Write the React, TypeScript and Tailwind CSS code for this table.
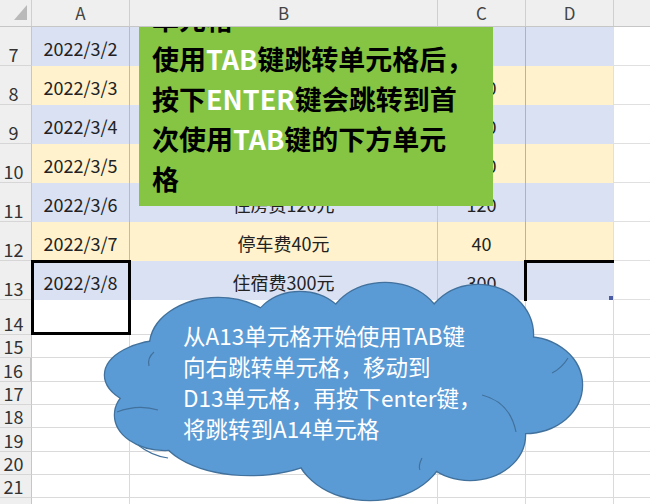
import React from "react";

type DataRow = { n: string; a: string; b: string; c: string; bg: string };

const dataRows: DataRow[] = [
  { n: "7", a: "2022/3/2", b: "交通费80元", c: "80", bg: "bg-[#d9e1f2]" },
  { n: "8", a: "2022/3/3", b: "餐饮费200元", c: "200", bg: "bg-[#fff2cc]" },
  { n: "9", a: "2022/3/4", b: "办公费150元", c: "150", bg: "bg-[#d9e1f2]" },
  { n: "10", a: "2022/3/5", b: "通讯费100元", c: "100", bg: "bg-[#fff2cc]" },
  { n: "11", a: "2022/3/6", b: "住房费120元", c: "120", bg: "bg-[#d9e1f2]" },
  { n: "12", a: "2022/3/7", b: "停车费40元", c: "40", bg: "bg-[#fff2cc]" },
  { n: "13", a: "2022/3/8", b: "住宿费300元", c: "300", bg: "bg-[#d9e1f2]" },
];

const shortRows: { n: string; h: string; mark?: boolean }[] = [
  { n: "15", h: "h-[23px]" },
  { n: "16", h: "h-[24px]", mark: true },
  { n: "17", h: "h-[23px]" },
  { n: "18", h: "h-[23px]" },
  { n: "19", h: "h-[24px]" },
  { n: "20", h: "h-[23px]" },
  { n: "21", h: "h-[23px]" },
  { n: "", h: "h-[23px]" },
];

function Cloud() {
  const ellipses: [number, number, number, number][] = [
    [118, 66, 68, 48],
    [200, 55, 50, 43],
    [285, 50, 58, 47],
    [378, 55, 55, 50],
    [425, 105, 57, 48],
    [370, 155, 55, 45],
    [270, 165, 75, 55],
    [150, 150, 90, 45],
    [65, 135, 50, 35],
    [70, 95, 65, 35],
    [240, 110, 190, 70],
  ];
  return (
    <svg className="absolute left-0 top-0" width="490" height="225" viewBox="0 0 490 225">
      {ellipses.map(([cx, cy, rx, ry], i) => (
        <ellipse key={"s" + i} cx={cx} cy={cy} rx={rx} ry={ry} fill="#5b9bd5" stroke="#41719c" strokeWidth="2.5" />
      ))}
      {ellipses.map(([cx, cy, rx, ry], i) => (
        <ellipse key={"f" + i} cx={cx} cy={cy} rx={rx} ry={ry} fill="#5b9bd5" />
      ))}
      <g fill="none" stroke="#41719c" strokeWidth="1.2">
        <path d="M452 93 Q462 88 468 78" />
        <path d="M382 115 Q410 122 416 152" />
        <path d="M17 132 Q38 124 58 130" />
        <path d="M54 72 Q47 78 49 86" />
        <path d="M38 165 Q52 176 68 178" />
        <path d="M322 178 Q318 186 320 190" />
      </g>
    </svg>
  );
}

export default function App() {
  const rh =
    "w-[32px] shrink-0 bg-[#efefef] border-r border-b border-r-[#c6c6c6] border-b-[#d6d6d6] flex justify-center pr-[4px] text-[18px] leading-none text-[#333]";
  return (
    <div className="relative w-[650px] h-[504px] overflow-hidden bg-white font-['Noto_Sans_CJK_SC',sans-serif] text-[#222]">
      {/* column header */}
      <div className="relative z-20 flex h-[27px] bg-[#efefef] border-b border-[#c6c6c6] text-[17px] text-[#444]">
        <div className="relative w-[32px] shrink-0 border-r border-[#cfcfcf]">
          <svg className="absolute left-[14px] top-[5px]" width="13" height="15">
            <polygon points="13,0 13,15 0,15" fill="#b9b9b9" />
          </svg>
        </div>
        <div className="w-[98px] shrink-0 border-r border-[#cfcfcf] flex items-center justify-center">A</div>
        <div className="w-[308px] shrink-0 border-r border-[#cfcfcf] flex items-center justify-center">B</div>
        <div className="w-[88px] shrink-0 border-r border-[#cfcfcf] flex items-center justify-center">C</div>
        <div className="w-[88px] shrink-0 border-r border-[#cfcfcf] flex items-center justify-center">D</div>
        <div className="flex-1" />
      </div>

      {/* colored data rows */}
      {dataRows.map((r) => (
        <div key={r.n} className="flex h-[39px] text-[18px]">
          <div className={rh + " items-end pb-[2px]"}>{r.n}</div>
          <div className={"w-[98px] shrink-0 border-r border-[#a9bde0] flex items-center justify-center pt-[3px] " + r.bg}>{r.a}</div>
          <div className={"w-[308px] shrink-0 border-r border-[#b7c6e2] flex items-center justify-center pt-[3px] " + r.bg}>{r.b}</div>
          <div className={"w-[88px] shrink-0 border-r border-[#9fb5de] flex items-center justify-center pt-[3px] " + r.bg}>{r.c}</div>
          <div className={"w-[88px] shrink-0 border-r border-[#e0e0e0] " + r.bg} />
          <div className="flex-1 border-b border-[#e0e0e0]" />
        </div>
      ))}

      {/* row 14 */}
      <div className="flex h-[35px]">
        <div className={rh + " items-end pb-[2px]"}>14</div>
        <div className="w-[98px] shrink-0 border-r border-b border-[#dadada]" />
        <div className="w-[308px] shrink-0 border-r border-b border-[#dadada]" />
        <div className="w-[88px] shrink-0 border-r border-b border-[#dadada]" />
        <div className="w-[88px] shrink-0 border-r border-b border-[#dadada]" />
        <div className="flex-1 border-b border-[#dadada]" />
      </div>

      {shortRows.map((r, i) => (
        <div key={i} className={"flex " + r.h}>
          <div
            className={
              rh +
              " items-center " +
              (r.mark ? "border-r-2 border-r-[#217346] text-[#6a6a6a]" : "")
            }
          >
            {r.n}
          </div>
          <div className="w-[98px] shrink-0 border-r border-b border-[#dadada]" />
          <div className="w-[308px] shrink-0 border-r border-b border-[#dadada]" />
          <div className="w-[88px] shrink-0 border-r border-b border-[#dadada]" />
          <div className="w-[88px] shrink-0 border-r border-b border-[#dadada]" />
          <div className="flex-1 border-b border-[#dadada]" />
        </div>
      ))}

      {/* selection A13:A14 */}
      <div className="absolute left-[31px] top-[260px] w-[100px] h-[75px] border-[3px] border-black z-[5]" />
      {/* D13 partial selection */}
      <div className="absolute left-[524px] top-[260px] w-[90px] h-[41px] border-t-[3px] border-l-[3px] border-black z-[5]" />
      <div className="absolute left-[609px] top-[296px] w-[4px] h-[4px] bg-[#4b5aa5] z-[5]" />

      {/* green callout */}
      <div className="absolute left-[139px] top-[-1px] w-[354px] h-[207px] bg-[#86c443] z-10 pl-[13px] text-[27px] font-bold leading-[40px] text-black whitespace-nowrap">
        <div>单元格</div>
        <div>
          使用<span className="text-white">TAB</span>键跳转单元格后，
        </div>
        <div>
          按下<span className="text-white">ENTER</span>键会跳转到首
        </div>
        <div>
          次使用<span className="text-white">TAB</span>键的下方单元
        </div>
        <div>格</div>
      </div>

      {/* cloud callout */}
      <div className="absolute left-[100px] top-[280px] w-[490px] h-[225px] z-10">
        <Cloud />
        <div className="absolute left-[83px] top-[40px] text-[22.5px] leading-[31px] text-white whitespace-nowrap">
          <div>从A13单元格开始使用TAB键</div>
          <div>向右跳转单元格，移动到</div>
          <div>D13单元格，再按下enter键，</div>
          <div>将跳转到A14单元格</div>
        </div>
      </div>
    </div>
  );
}
